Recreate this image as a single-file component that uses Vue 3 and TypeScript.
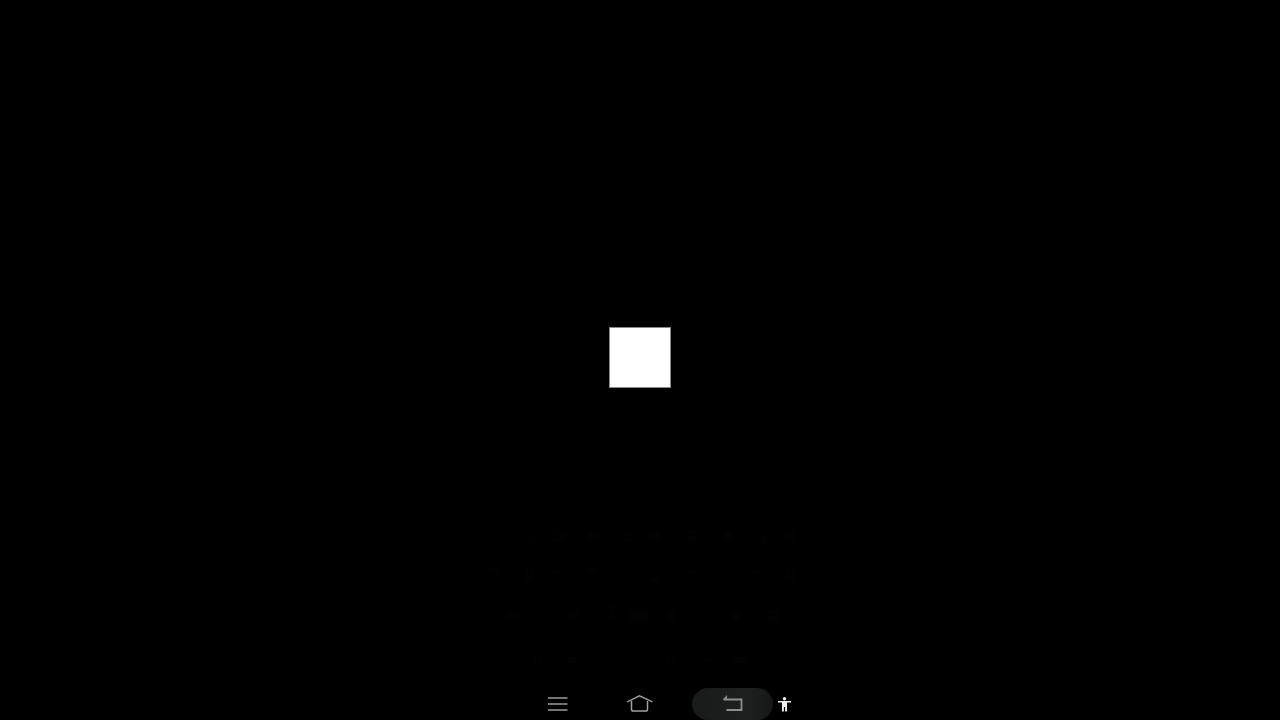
<template>
  <div class="screen">
    <main class="stage">
      <div class="square"></div>
    </main>

    <!-- Teclado casi invisible detras de la pantalla negra -->
    <div class="ghost-keys">
      <span
        v-for="(k, i) in ghostKeys"
        :key="i"
        class="ghost-key"
        :style="{ left: k[0] + 'px', top: k[1] + 'px', width: k[2] + 'px', height: k[3] + 'px' }"
      ></span>
    </div>

    <nav class="nav-bar">
      <button class="nav-btn menu-btn" aria-label="Menu">
        <svg width="20" height="14" viewBox="0 0 20 14">
          <path d="M0 1H19.5M0 7H19.5M0 13H19.5" stroke="#9a9a9a" stroke-width="1.7" fill="none" />
        </svg>
      </button>
      <button class="nav-btn home-btn" aria-label="Home">
        <svg width="26" height="18" viewBox="0 0 26 18">
          <path d="M0.3 6.8L12.5 0.8L25.5 6.8" stroke="#a0a0a0" stroke-width="1.3" fill="none" />
          <path d="M4.5 6V14.2Q4.5 16 6.3 16H18.7Q20.5 16 20.5 14.2V6" stroke="#a0a0a0" stroke-width="1.5" fill="none" />
        </svg>
      </button>
      <button class="nav-btn back-btn" aria-label="Back">
        <svg class="back-icon" width="21" height="18" viewBox="0 0 21 18">
          <path d="M1.5 5.5H19.5V16H4.5" stroke="#8e8e8e" stroke-width="1.8" fill="none" />
          <path d="M1 5.5L5 1V5.5Z" fill="#8e8e8e" />
        </svg>
      </button>
      <button class="nav-btn a11y-btn" aria-label="Accessibility">
        <svg width="13" height="15" viewBox="0 0 13 15">
          <circle cx="6.5" cy="1.8" r="1.7" fill="#ededed" />
          <path d="M0 4H13V5.6H9V14.5H7.1V10H5.9V14.5H4V5.6H0Z" fill="#ededed" />
        </svg>
      </button>
    </nav>
  </div>
</template>

<script setup lang="ts">
// left, top, width, height relativos al teclado
const ghostKeys: number[][] = [
  [60, 23, 2, 10], [83, 24, 12, 8], [118, 23, 10, 9], [155, 23, 8, 9], [180, 23, 10, 9], [217, 20, 8, 10], [254, 23, 8, 9], [292, 26, 4, 8], [316, 20, 8, 12],
  [20, 58, 8, 6], [55, 58, 8, 14], [81, 58, 10, 6], [118, 58, 8, 6], [181, 67, 8, 6], [217, 58, 8, 6], [281, 58, 8, 6], [316, 58, 8, 14],
  [38, 100, 10, 8], [100, 100, 8, 8], [138, 96, 6, 12], [160, 101, 18, 10], [196, 102, 8, 8], [262, 100, 8, 10], [298, 100, 10, 10],
  [63, 145, 8, 10], [98, 147, 8, 6], [196, 147, 8, 8], [235, 148, 8, 4], [262, 147, 16, 6],
]
</script>

<style scoped>
.screen {
  position: relative;
  width: 1280px;
  height: 720px;
  background: #000;
  display: flex;
  flex-direction: column;
  overflow: hidden;
}

.stage {
  flex: 1;
  display: flex;
  justify-content: center;
  padding-top: 327px;
}

.square {
  box-sizing: border-box;
  width: 62px;
  height: 61px;
  background: #fff;
  border: 1px solid #8a8a8a;
}

.ghost-keys {
  position: absolute;
  left: 470px;
  top: 510px;
  width: 340px;
  height: 170px;
}

.ghost-key {
  position: absolute;
  background: #020202;
}

.nav-bar {
  height: 32px;
  display: flex;
  align-items: center;
  padding-left: 548px;
}

.nav-btn {
  border: none;
  background: transparent;
  padding: 0;
  display: flex;
  align-items: center;
  justify-content: center;
}

.menu-btn {
  width: 20px;
  margin-right: 59px;
}

.home-btn {
  width: 26px;
  margin-right: 39px;
}

.back-btn {
  width: 81px;
  height: 32px;
  border-radius: 16px;
  background: linear-gradient(90deg, #191b1b 0%, #1e2020 70%, #161818 100%);
  margin-right: 5px;
}

.back-icon {
  margin-bottom: 2px;
}

.a11y-btn {
  width: 13px;
}
</style>

<style>
body {
  background: #000;
}
</style>
